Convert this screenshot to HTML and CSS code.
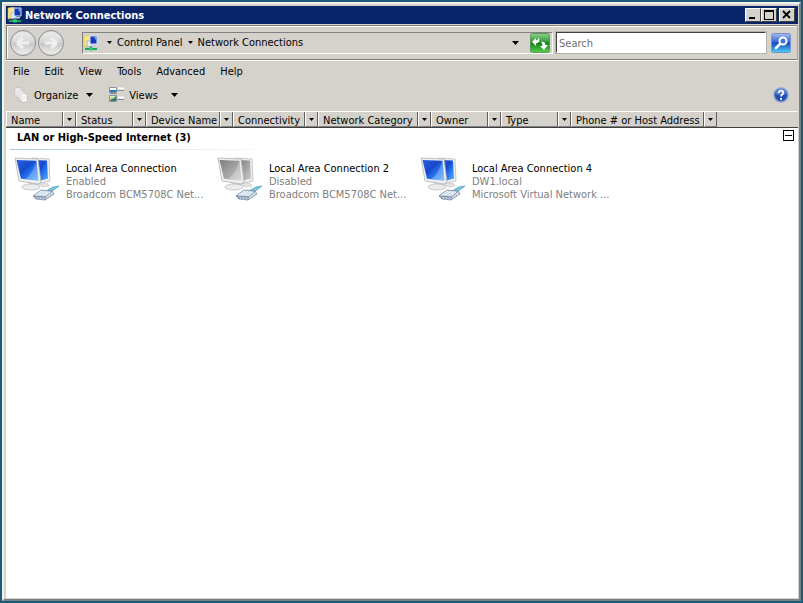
FILE: index.html
```
<!DOCTYPE html>
<html lang="en">
<head>
    <meta charset="UTF-8">
    <meta name="viewport" content="width=device-width, initial-scale=1.0">
    <title>Network Connections</title>
    <link rel="stylesheet" href="styles.css">
</head>
<body>
    <svg class="defs" aria-hidden="true">
        <defs>
            <linearGradient id="screenBlue" x1="0" y1="0" x2="1" y2="1">
                <stop offset="0" stop-color="#2a62d8"/>
                <stop offset="0.4" stop-color="#1748cc"/>
                <stop offset="0.6" stop-color="#2270ee"/>
                <stop offset="1" stop-color="#62b4fc"/>
            </linearGradient>
            <linearGradient id="screenGray" x1="0" y1="0" x2="1" y2="1">
                <stop offset="0" stop-color="#7c7c7c"/>
                <stop offset="0.5" stop-color="#a2a2a2"/>
                <stop offset="1" stop-color="#cecece"/>
            </linearGradient>
            <linearGradient id="green" x1="0" y1="0" x2="0" y2="1">
                <stop offset="0" stop-color="#8fd08a"/>
                <stop offset="0.45" stop-color="#2f9a35"/>
                <stop offset="0.5" stop-color="#108018"/>
                <stop offset="1" stop-color="#5bd04e"/>
            </linearGradient>
            <linearGradient id="blue" x1="0" y1="0" x2="0" y2="1">
                <stop offset="0" stop-color="#a5bdf0"/>
                <stop offset="0.45" stop-color="#3465d4"/>
                <stop offset="0.5" stop-color="#1548c4"/>
                <stop offset="1" stop-color="#4fd0fa"/>
            </linearGradient>
        </defs>
        <symbol id="arrow" viewBox="0 0 7 4"><path d="M0 0h7L3.500 4z"/></symbol>
        <symbol id="network" viewBox="0 0 16 16">
            <path d="M1 1l6-1v11l-6 1z" fill="#f7e588" stroke="#d8bd55" stroke-width=".6"/>
            <path d="M4 6l5-1v6l-5 1z" fill="#e8eefc" stroke="#8094bc" stroke-width=".6"/>
            <path d="M7 1h7v8H7z" fill="#1839b8" stroke="#d5e2fb"/>
            <path d="M11 2h2.500v4z" fill="#7ca9f4"/>
            <path d="M8 10h5v1.500H8z" fill="#c6cede"/>
            <path d="M8 11.500v2M2 14h12" stroke="#19a553" stroke-width="1.800"/>
            <path d="M6 12.500h4v3H6z" fill="#33c46d"/>
        </symbol>
        <symbol id="monitors" viewBox="0 0 46 46">
            <path d="M27 26l7 2 1 2-6 1-6-3z" fill="#e2e2e2" stroke="#c4c4c4" stroke-width=".6"/>
            <path d="M18 2l17 1 1 22-13 3z" fill="#efefef" stroke="#b8bdc4" stroke-width=".8"/>
            <path d="M20 4l13 .6 1 18-11 3z" class="screen"/>
            <path d="M14 25l8 1 2 5-8 1z" fill="#d4d6d9"/>
            <ellipse cx="17" cy="31" rx="9" ry="3" fill="#ececec" stroke="#b4b7bb" stroke-width=".7"/>
            <path d="M1 2l23 1 3 23-3 2L5 25z" fill="#f0f0f0" stroke="#aeb3ba" stroke-width=".8"/>
            <path d="M2.500 4l20 .8 2 20-17.500-2z" class="screen"/>
            <path d="M22.500 4.800l2 20-13-1.500q8-7 11-18.500z" fill="#fff" opacity=".25"/>
            <g stroke-linejoin="round">
                <path d="M37 36l8-6-6 1-7 4z" fill="#7cc5dd" stroke="#439cba" stroke-width=".7"/>
                <path d="M19 40l8-6 11 1 2 3-9 6-9-1z" fill="#c8d8e8" stroke="#7b8b9f" stroke-width=".8"/>
                <path d="M19 40l12 1 7-6M31 41v3" fill="none" stroke="#65768c" stroke-width=".8"/>
                <path d="M22 39l6-4M25 39.300l6-4M28 39.600l6-4M31 40l5-4" stroke="#f5f9fc"/>
                <path d="M22 41v2M25 41v2M28 41v2" stroke="#65768c" stroke-width=".8"/>
            </g>
        </symbol>
    </svg>

    <div class="window">
        <header class="titlebar">
            <svg class="icon16"><use href="#network"/></svg>
            <h1>Network Connections</h1>
            <div class="window-buttons">
                <button aria-label="Minimize"><svg viewBox="0 0 14 12"><path d="M3 8h6v2H3z"/></svg></button>
                <button aria-label="Maximize"><svg viewBox="0 0 14 12"><path d="M2 1h10v10H2zM3 3v7h8V3z" fill-rule="evenodd"/></svg></button>
                <button aria-label="Close" class="close"><svg viewBox="0 0 14 12"><path d="M3 2l7 7M10 2L3 9" stroke="#000" stroke-width="1.800"/></svg></button>
            </div>
        </header>

        <div class="navbar">
            <div class="history">
                <button aria-label="Back"><svg viewBox="0 0 24 24"><path d="M6 12l6-5M6 12l6 5M6 12h12"/></svg></button>
                <button aria-label="Forward"><svg viewBox="0 0 24 24"><path d="M18 12l-6-5M18 12l-6 5M18 12H6"/></svg></button>
            </div>
            <nav class="address">
                <svg class="icon16"><use href="#network"/></svg>
                <svg class="crumb-arrow"><use href="#arrow"/></svg>
                <a href="#">Control Panel</a>
                <svg class="crumb-arrow"><use href="#arrow"/></svg>
                <a href="#">Network Connections</a>
                <button class="history-drop" aria-label="Previous locations"><svg class="arrow"><use href="#arrow"/></svg></button>
                <button class="square" aria-label="Refresh">
                    <svg viewBox="0 0 20 20">
                        <rect x=".5" y=".5" width="19" height="19" rx="2" fill="url(#green)" stroke="#5b9b5d"/>
                        <path d="M2 9l4-4v2.500q2 0 3-3 1.500 5-3 6V13z" fill="#fff"/>
                        <path d="M18 12l-4 5-4-4h2.500q0-3-1.500-4 4-1 4.500 3z" fill="#fff"/>
                    </svg>
                </button>
            </nav>
            <input class="search" type="text" placeholder="Search" aria-label="Search">
            <button class="square" aria-label="Start search">
                <svg viewBox="0 0 20 20">
                    <rect x=".5" y=".5" width="19" height="19" rx="2" fill="url(#blue)" stroke="#7890c5"/>
                    <path d="M5 15l4-4" stroke="#fff" stroke-width="2.500" stroke-linecap="round"/>
                    <circle cx="12" cy="8" r="3.500" fill="#3d75dc" stroke="#fff" stroke-width="2"/>
                </svg>
            </button>
        </div>

        <nav class="menubar">
            <button>File</button>
            <button>Edit</button>
            <button>View</button>
            <button>Tools</button>
            <button>Advanced</button>
            <button>Help</button>
        </nav>

        <div class="toolbar">
            <button class="tool">
                <svg class="icon16" viewBox="0 0 16 16">
                    <g fill="#fff" stroke="#bbb8b1" stroke-width=".7">
                        <path d="M1 1h6v8H1z"/>
                        <path d="M3 3h6v8H3z"/>
                        <path d="M5 5h6v8H5z"/>
                        <path d="M7 7h6v8H7z"/>
                    </g>
                    <path d="M8.500 10h3M8.500 12h3" stroke="#ddd"/>
                </svg>
                Organize
                <svg class="arrow"><use href="#arrow"/></svg>
            </button>
            <button class="tool views">
                <svg class="icon16" viewBox="0 0 16 16">
                    <path d="M.5.500h7v5h-7z" fill="#fff" stroke="#8195aa"/>
                    <path d="M1 3h6v2H1z" fill="#2575b8"/>
                    <path d="M.5 8.500h7v6h-7z" fill="#dfe9ae" stroke="#8195aa"/>
                    <path d="M1 14l2-3 1 1 3-3v5z" fill="#367a5c"/>
                    <path d="M9 1.500h6M9 10.500h6" stroke="#fff" stroke-width="2"/>
                    <path d="M8 3.500h7M8 12.500h7M1 6.500h7" stroke="#8b8b8b"/>
                </svg>
                Views
                <svg class="arrow"><use href="#arrow"/></svg>
            </button>
            <button class="help" aria-label="Help">
                <svg viewBox="0 0 16 16"><circle cx="8" cy="8" r="7" fill="#2450ad" stroke="#8ba4d6" stroke-width="1.500"/><path d="M2.500 7a5.500 5.500 0 0 1 11 0q-5 2-11 0z" fill="#6f94dd" opacity=".7"/><path d="M5.700 6q0-2.300 2.300-2.300T10.300 6q0 1-1.300 1.800-.9.600-.9 1.700M8 11v2" fill="none" stroke="#fff" stroke-width="1.700"/></svg>
            </button>
        </div>

        <div class="columns">
            <div class="column short"><button>Name</button><button class="filter" aria-label="Filter Name"><svg><use href="#arrow"/></svg></button></div>
            <div class="column short"><button>Status</button><button class="filter" aria-label="Filter Status"><svg><use href="#arrow"/></svg></button></div>
            <div class="column device"><button>Device Name</button><button class="filter" aria-label="Filter Device Name"><svg><use href="#arrow"/></svg></button></div>
            <div class="column connectivity"><button>Connectivity</button><button class="filter" aria-label="Filter Connectivity"><svg><use href="#arrow"/></svg></button></div>
            <div class="column category"><button>Network Category</button><button class="filter" aria-label="Filter Network Category"><svg><use href="#arrow"/></svg></button></div>
            <div class="column short"><button>Owner</button><button class="filter" aria-label="Filter Owner"><svg><use href="#arrow"/></svg></button></div>
            <div class="column short"><button>Type</button><button class="filter" aria-label="Filter Type"><svg><use href="#arrow"/></svg></button></div>
            <div class="column phone"><button>Phone # or Host Address</button><button class="filter" aria-label="Filter Phone # or Host Address"><svg><use href="#arrow"/></svg></button></div>
        </div>

        <main class="content">
            <div class="group">
                <h2>LAN or High-Speed Internet (3)</h2>
                <button class="collapse" aria-label="Collapse group"></button>
            </div>
            <ul class="connections">
                <li class="connection">
                    <svg><use href="#monitors"/></svg>
                    <div>
                        <h3>Local Area Connection</h3>
                        <p>Enabled</p>
                        <p>Broadcom BCM5708C Net...</p>
                    </div>
                </li>
                <li class="connection disabled">
                    <svg><use href="#monitors"/></svg>
                    <div>
                        <h3>Local Area Connection 2</h3>
                        <p>Disabled</p>
                        <p>Broadcom BCM5708C Net...</p>
                    </div>
                </li>
                <li class="connection">
                    <svg><use href="#monitors"/></svg>
                    <div>
                        <h3>Local Area Connection 4</h3>
                        <p>DW1.local</p>
                        <p>Microsoft Virtual Network ...</p>
                    </div>
                </li>
            </ul>
        </main>
    </div>
</body>
</html>
```

FILE: styles.css
```
* {
    box-sizing: border-box;
}
body {
    margin: 0;
    height: 100vh;
    padding: 2px;
    display: flex;
    background: #1d5a78;
    font-family: "DejaVu Sans Condensed", "DejaVu Sans", sans-serif;
    font-size: 11px;
    line-height: 13px;
    color: #000;
}
h1, h2, h3, p, ul {
    margin: 0;
    padding: 0;
    font-size: 11px;
}
button {
    font: inherit;
    color: inherit;
    padding: 0;
    border: none;
    background: none;
    white-space: nowrap;
}
svg {
    display: block;
    flex: none;
}
a {
    color: inherit;
    text-decoration: none;
}
.defs {
    position: absolute;
    width: 0;
    height: 0;
}
.icon16 {
    width: 16px;
    height: 16px;
}
.arrow {
    width: 7px;
    height: 4px;
}
.window {
    flex: 1;
    min-width: 0;
    display: flex;
    flex-direction: column;
    padding: 2px 1px 1px 2px;
    border: 2px solid;
    border-color: #f4f2ef #77818a #77818a #f4f2ef;
    background: #d5d2cc;
}

/* title bar */
.titlebar {
    display: flex;
    align-items: center;
    height: 18px;
    padding: 0 3px 0 1px;
    gap: 2px;
    background: #0a246a;
    color: #fff;
}
.window-buttons {
    display: flex;
    margin-left: auto;
}
.window-buttons button {
    width: 16px;
    height: 14px;
    background: #d5d2cc;
    border: 1px solid;
    border-color: #fff #404040 #404040 #fff;
}
.window-buttons .close {
    margin-left: 2px;
}

/* address row */
.navbar {
    display: flex;
    align-items: center;
    height: 35px;
    margin-top: 1px;
    padding: 0 6px 0 3px;
    border: 1px solid #808080;
    border-right-color: #a5a29c;
    box-shadow: inset 1px 1px #fff, 0 1px #fff;
}
.history {
    display: flex;
    gap: 2px;
    padding-right: 18px;
}
.history button {
    width: 26px;
    height: 26px;
    border: 1px solid #8e8e8e;
    border-radius: 50%;
    background: linear-gradient(#eee, #d6d6d6 48%, #c6c6c6 52%, #f2f2f2);
    box-shadow: inset 0 0 0 1px #ddd;
}
.history path {
    fill: none;
    stroke: #efefef;
    stroke-width: 3;
}
.address {
    flex: 1;
    display: flex;
    align-items: center;
    height: 22px;
    padding-right: 2px;
    border: 1px solid;
    border-color: #808080 #fff #fff #808080;
}
.crumb-arrow {
    width: 5px;
    height: 3px;
    margin: 0 5px;
}
.address .icon16 + .crumb-arrow {
    margin-left: 8px;
}
.history-drop {
    margin-left: auto;
    padding: 6px 11px;
}
.square, .square svg {
    width: 20px;
    height: 20px;
}
.search {
    width: 210px;
    height: 21px;
    margin: 0 5px 0 3px;
    padding: 2px 2px 0;
    border: 1px solid;
    border-color: #404040 #fff #fff #404040;
    outline: 1px solid #b5b2ab;
    border-radius: 0;
    background: #fff;
    font: inherit;
}
.search::placeholder {
    color: #6d6d6d;
    opacity: 1;
}

/* menu and toolbar */
.menubar {
    display: flex;
    align-items: center;
    height: 20px;
    margin-top: 1px;
    padding-left: 7px;
    gap: 15px;
}
.toolbar {
    display: flex;
    align-items: center;
    height: 30px;
    padding: 0 9px 2px 8px;
    gap: 16px;
}
.tool {
    display: flex;
    align-items: center;
    gap: 4px;
}
.tool .arrow {
    margin-left: 4px;
}
.views .arrow {
    margin-left: 9px;
}
.help {
    margin-left: auto;
    width: 16px;
    height: 16px;
}

/* column headers */
.columns {
    display: flex;
    height: 17px;
    border-top: 1px solid #fff;
    border-bottom: 1px solid #404040;
}
.column {
    display: flex;
}
.column button {
    flex: 1;
    min-width: 0;
    padding: 2px 0 0 4px;
    text-align: left;
    border-left: 1px solid #fff;
    border-right: 1px solid #606060;
    border-bottom: 1px solid #808080;
}
.column .filter {
    flex: none;
    width: 13px;
    padding: 1px 0 0 3px;
}
.filter svg {
    width: 5px;
    height: 3px;
}
.short {
    width: 70px;
}
.device {
    width: 87px;
}
.connectivity {
    width: 85px;
}
.category {
    width: 113px;
}
.phone {
    width: 146px;
}

/* items */
.content {
    flex: 1;
    background: #fff;
    padding: 2px 4px;
}
.group {
    display: flex;
    align-items: flex-start;
    justify-content: space-between;
    height: 20px;
    padding-left: 7px;
    background: linear-gradient(90deg, #a9c9dc, #fff) left bottom / 265px 1px no-repeat;
}
.group h2 {
    padding-top: 1px;
}
.collapse {
    width: 11px;
    height: 11px;
    border: 1px solid #000;
    background: linear-gradient(#000, #000) center / 7px 1px no-repeat;
}
.connections {
    display: flex;
    flex-wrap: wrap;
    list-style: none;
    padding: 6px 0 0 4px;
}
.connection {
    --screen: url(#screenBlue);
    display: flex;
    gap: 6px;
    width: 203px;
}
.connection.disabled {
    --screen: url(#screenGray);
}
.connection svg {
    width: 46px;
    height: 46px;
}
.connection div {
    padding-top: 6px;
}
.connection h3 {
    font-weight: normal;
}
.connection p {
    color: #808080;
    white-space: nowrap;
}
.screen {
    fill: var(--screen);
}
```
